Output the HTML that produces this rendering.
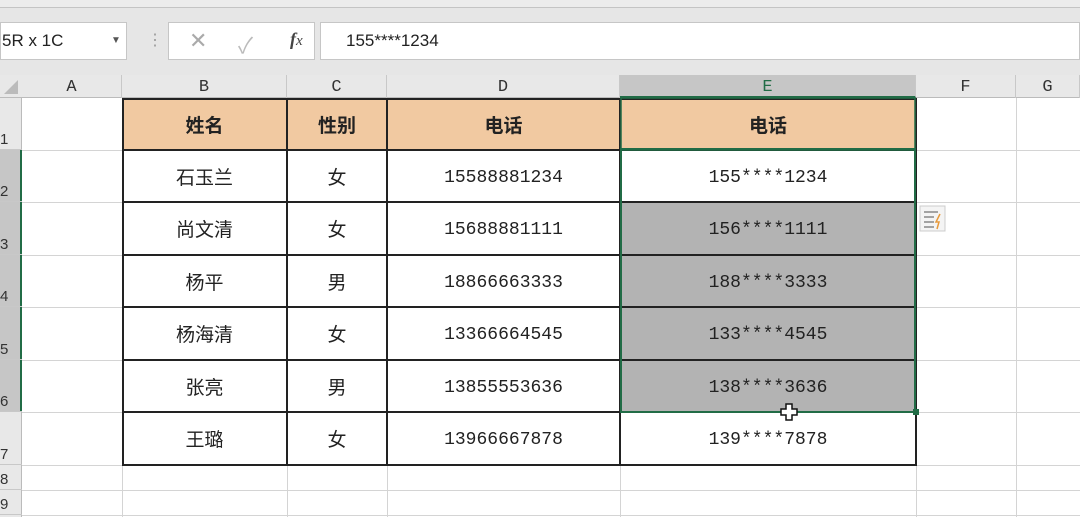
<!DOCTYPE html><html><head><meta charset="utf-8"><style>
*{margin:0;padding:0;box-sizing:border-box}
body{width:1080px;height:517px;overflow:hidden;background:#fff;position:relative;font-family:"Liberation Sans","Noto Sans CJK SC",sans-serif}
.a{position:absolute}
.cell{position:absolute;display:flex;align-items:center;justify-content:center;font-size:19px;color:#222}
.n{font-family:"Liberation Mono",monospace;font-size:18px;padding-top:3px}
.colh{position:absolute;top:75px;height:23px;font-family:"Liberation Mono",monospace;font-size:17px;text-align:center;line-height:26px;color:#333;border-right:1px solid #c8c8c8}
.rowh{position:absolute;left:0;width:22px;font-size:15px;color:#333;display:flex;align-items:flex-end;padding-bottom:1px;border-bottom:1px solid #c8c8c8}
</style></head><body>
<div class="a" style="left:0;top:0;width:1080px;height:75px;background:#e6e6e6"></div>
<div class="a" style="left:0;top:0;width:1080px;height:8px;background:#ececec;border-bottom:1px solid #c4c4c4"></div>
<div class="a" style="left:0;top:22px;width:127px;height:38px;background:#fff;border:1px solid #c6c6c6;font-size:17px;line-height:36px;padding-left:1px;color:#222">5R x 1C<span style="position:absolute;left:110px;top:0;font-size:10px;color:#555">▼</span></div>
<div class="a" style="left:147px;top:30px;color:#999;font-size:16px">⋮</div>
<div class="a" style="left:168px;top:22px;width:147px;height:38px;background:#fff;border:1px solid #c6c6c6"></div>
<div class="a" style="left:189px;top:28px;color:#aaa;font-size:22px">✕</div>
<div class="a" style="left:238px;top:28px;color:#bbb;font-size:22px">✓</div>
<div class="a" style="left:290px;top:29px;color:#444;font-size:18px;font-style:italic;font-family:'Liberation Serif',serif"><b>f</b><small>x</small></div>
<div class="a" style="left:320px;top:22px;width:760px;height:38px;background:#fff;border:1px solid #c6c6c6;font-size:17px;line-height:36px;padding-left:25px;color:#222">155****1234</div>
<div class="a" style="left:0;top:75px;width:1080px;height:23px;background:#e8e8e8;border-bottom:1px solid #bbb"></div>
<div class="a" style="left:4px;top:80px;width:0;height:0;border-left:14px solid transparent;border-bottom:14px solid #bbb"></div>
<div class="colh" style="left:22px;width:100px">A</div>
<div class="colh" style="left:122px;width:165px">B</div>
<div class="colh" style="left:287px;width:100px">C</div>
<div class="colh" style="left:387px;width:233px">D</div>
<div class="colh" style="left:620px;width:296px;background:#c6c6c6;color:#216c46;border-bottom:2px solid #216c46">E</div>
<div class="colh" style="left:916px;width:100px">F</div>
<div class="colh" style="left:1016px;width:64px">G</div>
<div class="a" style="left:0;top:98px;width:22px;height:419px;background:#e8e8e8;border-right:1px solid #bbb"></div>
<div class="a" style="left:0;top:150px;width:22px;height:262px;background:#c6c6c6;border-right:2px solid #216c46"></div>
<div class="rowh" style="top:98px;height:52px">1</div>
<div class="rowh" style="top:150px;height:52px">2</div>
<div class="rowh" style="top:202px;height:53px">3</div>
<div class="rowh" style="top:255px;height:52px">4</div>
<div class="rowh" style="top:307px;height:53px">5</div>
<div class="rowh" style="top:360px;height:52px">6</div>
<div class="rowh" style="top:412px;height:53px">7</div>
<div class="rowh" style="top:465px;height:25px">8</div>
<div class="rowh" style="top:490px;height:25px">9</div>
<svg class="a" style="left:22px;top:98px" width="1058" height="419">
<g stroke="#d4d4d4" stroke-width="1">
<line x1="100.5" y1="0" x2="100.5" y2="419"/><line x1="265.5" y1="0" x2="265.5" y2="419"/><line x1="365.5" y1="0" x2="365.5" y2="419"/><line x1="598.5" y1="0" x2="598.5" y2="419"/><line x1="894.5" y1="0" x2="894.5" y2="419"/><line x1="994.5" y1="0" x2="994.5" y2="419"/>
<line x1="0" y1="52.5" x2="1058" y2="52.5"/><line x1="0" y1="104.5" x2="1058" y2="104.5"/><line x1="0" y1="157.5" x2="1058" y2="157.5"/><line x1="0" y1="209.5" x2="1058" y2="209.5"/><line x1="0" y1="262.5" x2="1058" y2="262.5"/><line x1="0" y1="314.5" x2="1058" y2="314.5"/><line x1="0" y1="367.5" x2="1058" y2="367.5"/><line x1="0" y1="392.5" x2="1058" y2="392.5"/><line x1="0" y1="417.5" x2="1058" y2="417.5"/>
</g></svg>
<div class="a" style="left:122px;top:98px;width:794px;height:52px;background:#f1c9a1"></div>
<div class="a" style="left:620px;top:202px;width:296px;height:210px;background:#b3b3b3"></div>
<svg class="a" style="left:0;top:0" width="1080" height="517">
<g stroke="#222" stroke-width="2" fill="none">
<rect x="123" y="99" width="793" height="366"/>
<line x1="287" y1="99" x2="287" y2="465"/><line x1="387" y1="99" x2="387" y2="465"/><line x1="620" y1="99" x2="620" y2="465"/>
<line x1="123" y1="150" x2="916" y2="150"/><line x1="123" y1="202" x2="916" y2="202"/><line x1="123" y1="255" x2="916" y2="255"/><line x1="123" y1="307" x2="916" y2="307"/><line x1="123" y1="360" x2="916" y2="360"/><line x1="123" y1="412" x2="916" y2="412"/>
</g>
<rect x="621" y="149" width="294" height="263" fill="none" stroke="#216c46" stroke-width="2"/>
<rect x="621" y="98" width="294" height="52" fill="none" stroke="#216c46" stroke-width="1.5"/>
<rect x="913" y="409" width="6" height="6" fill="#216c46"/>
<rect x="920" y="206" width="25" height="25" fill="#f4f4f4" stroke="#ccc"/>
<g stroke="#888" stroke-width="1.5"><line x1="924" y1="212" x2="938" y2="212"/><line x1="924" y1="217" x2="934" y2="217"/><line x1="924" y1="222" x2="934" y2="222"/><line x1="924" y1="227" x2="934" y2="227"/></g>
<path d="M940 214 L936 222 L939 222 L937 229" stroke="#e89a3c" stroke-width="1.5" fill="none"/>
<path d="M786 404h6v5h5v6h-5v5h-6v-5h-5v-6h5z" fill="#fff" stroke="#111" stroke-width="1.5"/>
</svg>
<div class="cell" style="left:122px;top:98px;width:165px;height:52px;font-weight:bold">姓名</div>
<div class="cell" style="left:287px;top:98px;width:100px;height:52px;font-weight:bold">性别</div>
<div class="cell" style="left:387px;top:98px;width:233px;height:52px;font-weight:bold">电话</div>
<div class="cell" style="left:620px;top:98px;width:296px;height:52px;font-weight:bold">电话</div>
<div class="cell" style="left:122px;top:150px;width:165px;height:52px">石玉兰</div>
<div class="cell" style="left:122px;top:202px;width:165px;height:53px">尚文清</div>
<div class="cell" style="left:122px;top:255px;width:165px;height:52px">杨平</div>
<div class="cell" style="left:122px;top:307px;width:165px;height:53px">杨海清</div>
<div class="cell" style="left:122px;top:360px;width:165px;height:52px">张亮</div>
<div class="cell" style="left:122px;top:412px;width:165px;height:53px">王璐</div>
<div class="cell" style="left:287px;top:150px;width:100px;height:52px">女</div>
<div class="cell" style="left:287px;top:202px;width:100px;height:53px">女</div>
<div class="cell" style="left:287px;top:255px;width:100px;height:52px">男</div>
<div class="cell" style="left:287px;top:307px;width:100px;height:53px">女</div>
<div class="cell" style="left:287px;top:360px;width:100px;height:52px">男</div>
<div class="cell" style="left:287px;top:412px;width:100px;height:53px">女</div>
<div class="cell n" style="left:387px;top:150px;width:233px;height:52px">15588881234</div>
<div class="cell n" style="left:387px;top:202px;width:233px;height:53px">15688881111</div>
<div class="cell n" style="left:387px;top:255px;width:233px;height:52px">18866663333</div>
<div class="cell n" style="left:387px;top:307px;width:233px;height:53px">13366664545</div>
<div class="cell n" style="left:387px;top:360px;width:233px;height:52px">13855553636</div>
<div class="cell n" style="left:387px;top:412px;width:233px;height:53px">13966667878</div>
<div class="cell n" style="left:620px;top:150px;width:296px;height:52px">155****1234</div>
<div class="cell n" style="left:620px;top:202px;width:296px;height:53px">156****1111</div>
<div class="cell n" style="left:620px;top:255px;width:296px;height:52px">188****3333</div>
<div class="cell n" style="left:620px;top:307px;width:296px;height:53px">133****4545</div>
<div class="cell n" style="left:620px;top:360px;width:296px;height:52px">138****3636</div>
<div class="cell n" style="left:620px;top:412px;width:296px;height:53px">139****7878</div>
</body></html>
